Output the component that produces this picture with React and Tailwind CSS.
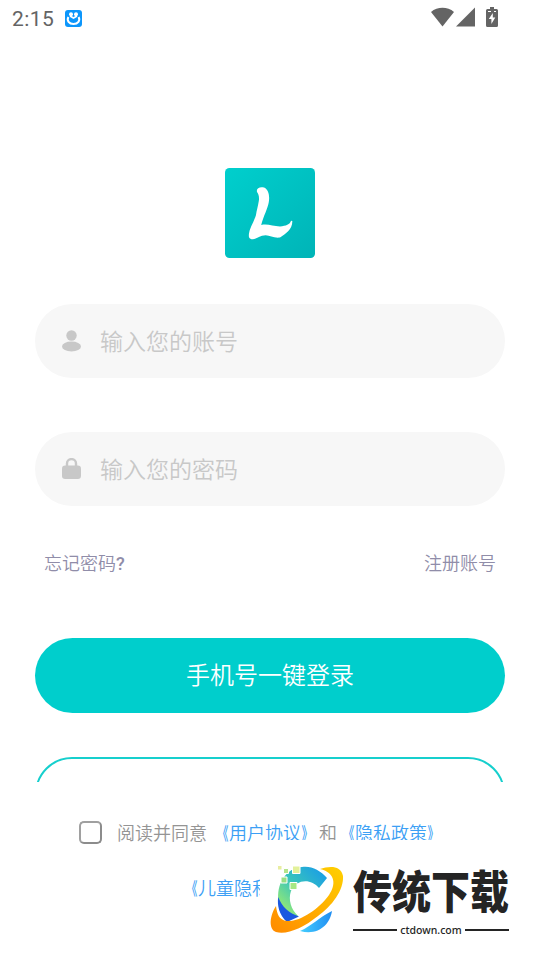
import React, { useState } from "react";

function StatusBar() {
  return (
    <header className="flex h-9 items-center justify-between pl-3 pr-[42px] text-[#646464]">
      <div className="flex items-center">
        <span className="w-[53px] pt-px font-[Roboto] text-[21px] leading-6 tracking-[0.4px]">2:15</span>
        <svg className="h-[17px] w-[17px]" viewBox="0 0 17 17">
          <rect width="17" height="17" rx="3" fill="#0c96fb" />
          <circle cx="6" cy="4.200" r="2" fill="#fff" />
          <circle cx="11" cy="4.200" r="2" fill="#fff" />
          <path d="M3.400 7C1.500 10.500 4 14 8.500 14S15.500 10.500 13.600 7" fill="none" stroke="#fff" strokeWidth="2" />
          <path d="M5 6 8.500 8 12 6" fill="none" stroke="#fff" strokeWidth="1.600" />
        </svg>
      </div>
      <div className="flex items-center pb-[2px]">
        <svg className="h-[20px] w-[23px]" viewBox="0 0 23 20" fill="currentColor">
          <path d="M0 5C6.500-.6 16.500-.6 23 5L11.500 19.500Z" />
        </svg>
        <svg className="ml-[2px] h-[20px] w-[19px]" viewBox="0 0 19 20" fill="currentColor">
          <path d="M0 19.500 19 .5v19Z" />
        </svg>
        <svg className="ml-[11px] h-[20px] w-3" viewBox="0 0 12 20">
          <path d="M4 0h4v2h2.500Q12 2 12 3.500v15Q12 20 10.500 20h-9Q0 20 0 18.500v-15Q0 2 1.500 2H4Z" fill="currentColor" />
          <path d="M2 4.500h3M8 4.500h2" stroke="#fff" strokeWidth="1" />
          <path d="M6.800 6 2.800 12h2.600v5L9.300 10.500H6.800Z" fill="#fff" />
        </svg>
      </div>
    </header>
  );
}

function AppLogo() {
  return (
    <svg className="mx-auto mt-[132px] block h-[90px] w-[90px]" viewBox="0 0 90 90">
      <defs>
        <linearGradient id="tile" x1="0" y1="0" x2="1" y2="1">
          <stop offset="0" stopColor="#00cfcd" />
          <stop offset="1" stopColor="#00b4b7" />
        </linearGradient>
      </defs>
      <rect width="90" height="90" rx="4.500" fill="url(#tile)" />
      <path
        d="M32 24C31 20 35 18.500 39 19.500C43 21 45 27 43.800 34C43 40 38.500 48 36.200 57C43 55.500 48 58.500 55 58.500C61 58 65 56.500 66 52.800L67.300 53C67.600 61 61 65.500 55 69.500C47 70.500 44 65.500 37 67.800C31 69.500 29 73 25 70.500C23 69 24 65 24.800 62C27 56 29.500 52 31 47C31.500 43 33 38 33.800 33C34.500 29 33.500 26 32 24Z"
        fill="#fff"
      />
    </svg>
  );
}

function UserIcon() {
  return (
    <svg className="h-[22px] w-[19px]" viewBox="0 0 19 22" fill="#c8c8c8">
      <circle cx="9.500" cy="5.500" r="5.200" />
      <ellipse cx="9.500" cy="16.500" rx="9.500" ry="5" />
    </svg>
  );
}

function LockIcon() {
  return (
    <svg className="h-[22px] w-[19px]" viewBox="0 0 19 22" fill="#c8c8c8">
      <rect y="7.500" width="19" height="13.500" rx="3.200" />
      <path d="M5 9V5.600a4.500 4.500 0 0 1 9 0V9" fill="none" stroke="#c8c8c8" strokeWidth="2.400" />
    </svg>
  );
}

function Field({ icon, type, placeholder }) {
  return (
    <label className="flex h-[74px] shrink-0 items-center gap-[19px] rounded-full bg-[#f7f7f7] pl-[27px] pr-6">
      {icon}
      <input
        type={type}
        placeholder={placeholder}
        className="min-w-0 flex-1 bg-transparent pb-[2px] text-[23px] font-[350] outline-none placeholder:text-[#c8c8c8]"
      />
    </label>
  );
}

function DocLink({ href, children }) {
  return (
    <a href={href} className="text-[#3c9ff5]">
      <span className="inline-block origin-right translate-x-[-0.5px] scale-x-[0.62] font-medium">《</span>
      {children}
      <span className="inline-block origin-left translate-x-[0.5px] scale-x-[0.62] font-medium">》</span>
    </a>
  );
}

function SiteBadge() {
  return (
    <aside className="absolute left-[260px] top-[840px] flex h-[120px] w-[280px] bg-white pl-[8px] pt-[22px]">
      <svg className="h-[76px] w-[78px] shrink-0" viewBox="8 7 78 76">
        <defs>
          <linearGradient id="arc" x1="0" y1="1" x2="1" y2="0">
            <stop offset="0" stopColor="#90e878" />
            <stop offset="0.15" stopColor="#90e878" />
            <stop offset="0.5" stopColor="#38c4bc" />
            <stop offset="1" stopColor="#1597ed" />
          </linearGradient>
          <linearGradient id="ring" x1="0" y1="1" x2="1" y2="0">
            <stop offset="0" stopColor="#ff8a00" />
            <stop offset="1" stopColor="#ffd000" />
          </linearGradient>
          <linearGradient id="tail" x1="0" y1="0" x2="1" y2="0">
            <stop offset="0" stopColor="#45cfff" />
            <stop offset="1" stopColor="#208df2" />
          </linearGradient>
        </defs>
        <path d="M18.500 47C16 29 26 13 42 12C51 10.500 60 15 67 23L59 33C51 23 36 24 31 36C28 45 31 54 38 61L30 63C21 59 19 52 18.500 47Z" fill="url(#arc)" />
        <path d="M18.200 42C22 52 29 58 39 61.500L27 67C19 60 17 50 18.200 42Z" fill="#1b58e0" />
        <path d="M60 14C69 11 81 10 83 21C84 35 72 51 58 61C43 73 27 80 16 77C8 74 10 60 16 51C17 59 19 65 27 66C40 67 59 54 69 40C76 30 76 18 60 14Z" fill="url(#ring)" />
        <path d="M40 76C52 71 59 62 72 56C70 69 59 81 40 76Z" fill="url(#tail)" />
        <g stroke="#fff" strokeWidth="1">
          <path d="M17.500 10.500h4.500v4.500h-4.500Z" fill="#e8eda0" />
          <path d="M23.500 13.500h5v5h-5Z" fill="#b4e48b" />
          <path d="M32.500 11h7.500v7.500h-7.500Z" fill="#e3f19a" />
          <path d="M21 22h6v6h-6Z" fill="#98df84" />
          <path d="M30 27.500h7v7h-7Z" fill="#a7e884" />
        </g>
      </svg>
      <div className="ml-[7px] w-[156px] pt-[5px] text-[#242424]">
        <div className="h-[44px] origin-top scale-y-[1.16] whitespace-nowrap text-[39px] leading-[38px] font-black">传统下载</div>
        <div className="mt-[13px] flex items-center gap-[3px]">
          <span className="h-[2px] flex-1 bg-[#242424]" />
          <span className="font-['Noto_Sans'] text-[10.5px] leading-3 font-medium">ctdown.com</span>
          <span className="h-[2px] flex-1 bg-[#242424]" />
        </div>
      </div>
    </aside>
  );
}

function App() {
  const [agreed, setAgreed] = useState(false);

  return (
    <div className="relative flex h-[960px] w-[540px] flex-col overflow-hidden bg-white font-['Noto_Sans_CJK_SC',sans-serif]">
      <StatusBar />
      <AppLogo />

      <main className="mt-[46px] flex h-[478px] flex-col overflow-hidden px-[35px]">
        <Field icon={<UserIcon />} type="text" placeholder="输入您的账号" />
        <div className="mt-[54px]">
          <Field icon={<LockIcon />} type="password" placeholder="输入您的密码" />
        </div>

        <div className="mt-[43px] flex justify-between px-[9px] text-[18px] leading-[26px] font-[350] text-[#908da9]">
          <a href="#forgot">
            忘记密码<span className="font-[Roboto] font-medium">?</span>
          </a>
          <a href="#register">注册账号</a>
        </div>

        <button className="mt-[61px] h-[75px] shrink-0 rounded-full bg-[#00cecc] pb-[4px] text-[24px] font-[350] text-white">
          手机号一键登录
        </button>
        <button className="mt-[44px] h-[74px] shrink-0 rounded-full border-2 border-[#16cfcd]" />
      </main>

      <footer className="mt-[36px] text-[18px] leading-7 font-[350] text-[#949494]">
        <div className="flex items-center pl-[79px]">
          <button
            onClick={() => setAgreed(!agreed)}
            className={`h-[23px] w-[23px] rounded-[5px] border-2 border-[#a0a0a0] border-r-[#8c8c8c] border-b-[#8c8c8c] ${agreed ? "bg-[#00cecc]" : "bg-white"}`}
          />
          <span className="mr-[4px] ml-[15px]">阅读并同意</span>
          <DocLink href="#terms">用户协议</DocLink>
          <span>和</span>
          <DocLink href="#privacy">隐私政策</DocLink>
        </div>
        <div className="mt-[27px] pl-[180px]">
          <DocLink href="#children">儿童隐私政策</DocLink>
        </div>
      </footer>

      <SiteBadge />
    </div>
  );
}

export default App;
